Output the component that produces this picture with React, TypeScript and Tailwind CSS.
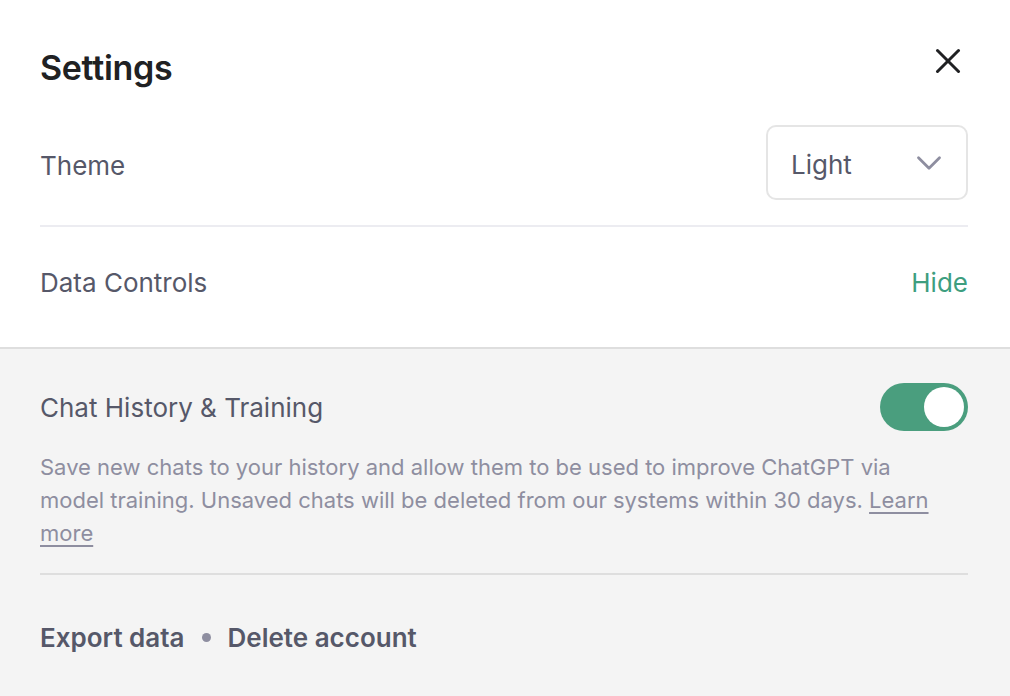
import React, { useState } from 'react';
import { X, ChevronDown } from 'lucide-react';

const App = () => {
  const [historyOn, setHistoryOn] = useState(true);

  return (
    <div
      className="w-[1010px] h-[696px] bg-white flex flex-col overflow-hidden"
      style={{ fontFamily: 'Inter, "Noto Sans", sans-serif' }}
    >
      {/* Header */}
      <div className="flex items-center justify-between pl-10 pr-[42px] pt-[42px] pb-[28px]">
        <h1 className="text-[34px] leading-[51px] font-semibold text-[#202123] tracking-[-0.3px]">Settings</h1>
        <button className="-mr-[1px] -mt-[14px] text-[#202123]">
          <X className="h-[42px] w-[42px]" strokeWidth={1.75} />
        </button>
      </div>

      {/* Theme */}
      <div className="ml-10 mr-[42px] flex items-center justify-between border-b-2 border-[#ececf1] pt-[4px] pb-[25px]">
        <span className="mt-[5px] text-[26px] text-[#565869]">Theme</span>
        <div className="flex h-[75px] w-[202px] items-center justify-between rounded-[10px] border-2 border-[#e5e5e5] pl-[23px] pr-[16px]">
          <span className="mt-[3px] text-[26px] text-[#565869]">Light</span>
          <ChevronDown className="h-[42px] w-[42px] text-[#8e8ea0]" strokeWidth={1.6} />
        </div>
      </div>

      {/* Data Controls */}
      <div className="ml-10 mr-[42px] flex h-[120px] items-center justify-between pb-[10px]">
        <span className="text-[26px] text-[#565869]">Data Controls</span>
        <button className="text-[26px] text-[#3e9e7f]">Hide</button>
      </div>

      {/* Data controls panel */}
      <div className="flex-1 border-t-2 border-[#dedede] bg-[#f4f4f4] pl-10 pr-[42px]">
        <div className="flex items-center justify-between pt-[34px]">
          <span className="text-[26px] text-[#565869]">Chat History &amp; Training</span>
          <button
            onClick={() => setHistoryOn(!historyOn)}
            className={`flex h-[48px] w-[88px] items-center rounded-full px-[4px] ${
              historyOn ? 'justify-end bg-[#4a9e7e]' : 'justify-start bg-[#c5c5d2]'
            }`}
          >
            <span className="block h-[40px] w-[40px] rounded-full bg-white" />
          </button>
        </div>
        <p className="mt-[20px] w-[905px] text-[22px] leading-[33px] text-[#8e8ea0]">
          Save new chats to your history and allow them to be used to improve ChatGPT via model training.
          Unsaved chats will be deleted from our systems within 30 days.{' '}
          <a className="underline underline-offset-[4px]">Learn more</a>
        </p>
        <div className="mt-[23px] border-t-2 border-[#dedede]" />
        <div className="flex items-center gap-[17px] pt-[43px] text-[26px] font-semibold text-[#565869]">
          <button>Export data</button>
          <span className="h-[9px] w-[9px] rounded-full bg-[#8e8ea0]" />
          <button>Delete account</button>
        </div>
      </div>
    </div>
  );
};

export default App;
